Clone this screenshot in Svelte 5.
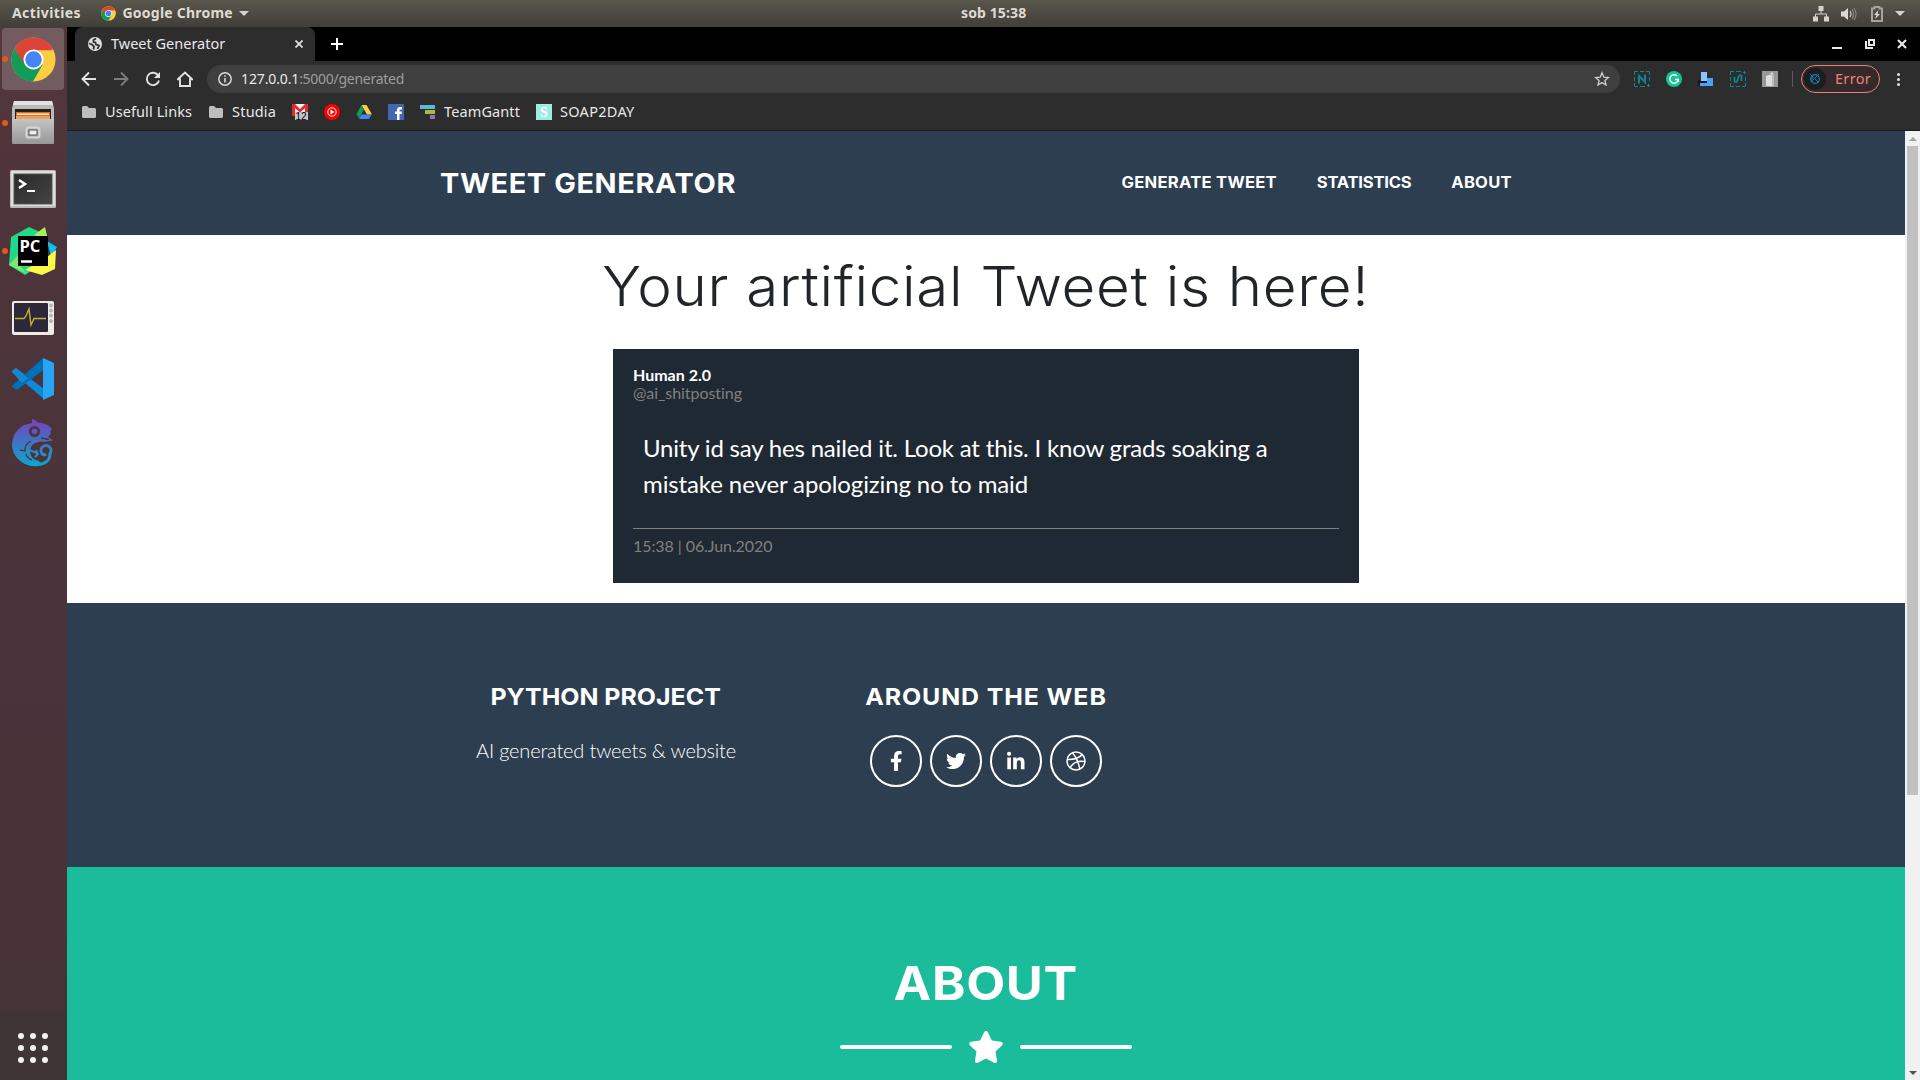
<script>
  const bookmarks = [
    { icon: 'folder', text: 'Usefull Links', cls: 'usefull' },
    { icon: 'folder', text: 'Studia', cls: 'studia' },
    { icon: 'gmail' },
    { icon: 'music' },
    { icon: 'drive' },
    { icon: 'facebook' },
    { icon: 'gantt', text: 'TeamGantt', cls: 'gantt' },
    { icon: 'soap', text: 'SOAP2DAY', cls: 'soap' }
  ];
  const apps = [
    { name: 'chrome', running: true, active: true },
    { name: 'files', running: true },
    { name: 'terminal' },
    { name: 'pycharm', running: true },
    { name: 'monitor' },
    { name: 'vscode' },
    { name: 'chameleon' }
  ];
  const links = [
    { text: 'Generate Tweet', cls: 'l-gen' },
    { text: 'Statistics', cls: 'l-stat' },
    { text: 'About', cls: 'l-about' }
  ];
  const socials = ['facebook', 'twitter', 'linkedin', 'dribbble'];
</script>

{#snippet chrome()}
  <svg class="fill" viewBox="0 0 48 48">
    <circle cx="24" cy="24" r="23.5" fill="#ffcd40" />
    <path d="M3.6 12.3A23.5 23.5 0 0 1 44.4 12.3L44 14H24L14 30Z" fill="#db4437" />
    <path d="M3.6 12.3A23.5 23.5 0 0 0 23.5 47.5L34 29 24 34 15 30Z" fill="#0f9d58" />
    <circle cx="24" cy="24" r="10.7" fill="#fff" />
    <circle cx="24" cy="24" r="8.8" fill="#4285f4" />
  </svg>
{/snippet}

{#snippet appIcon(name)}
  {#if name === 'chrome'}
    <div class="i45">{@render chrome()}</div>
  {:else if name === 'files'}
    <svg width="44" height="44" viewBox="0 0 44 44">
      <defs><linearGradient id="cab" x2="0" y2="1"><stop stop-color="#c4c4c4" /><stop offset="1" stop-color="#979797" /></linearGradient></defs>
      <path d="M3 0H41L43 7V20H1V7Z" fill="#b9b9b9" /><path d="M3 0H41L42 4H2Z" fill="#e2e2e2" />
      <path d="M4 8H40V20H4Z" fill="#26211f" />
      <path d="M5 11H39V18H5Z" fill="#df6a1f" /><path d="M6 12.5H38V14H6Z" fill="#fff0d8" /><path d="M5 15H39V18H5Z" fill="#e8a35a" />
      <path d="M1 18H43V42Q43 43 42 43H2Q1 43 1 42Z" fill="url(#cab)" />
      <rect x="15.5" y="26.500" width="13" height="10" rx="2" fill="none" stroke="#d6d6d6" stroke-width="2" />
      <rect x="18" y="29" width="8" height="5" fill="#eee" stroke="#555" />
    </svg>
  {:else if name === 'terminal'}
    <svg class="term" width="46" height="38" viewBox="0 0 46 38">
      <defs><linearGradient id="term" x2="1" y2="1"><stop stop-color="#2a2a2a" /><stop offset="1" stop-color="#444" /></linearGradient></defs>
      <rect width="46" height="38" rx="1.500" fill="#b8b8b8" /><rect x="1" y="1" width="44" height="35" fill="#dedede" />
      <rect x="4" y="4" width="38" height="30" fill="url(#term)" stroke="#555" />
      <path d="M9 10l6 4-6 4" fill="none" stroke="#fff" stroke-width="2.500" /><path d="M17 21h8" stroke="#fff" stroke-width="2" />
    </svg>
  {:else if name === 'pycharm'}
    <svg width="48" height="48" viewBox="0 0 48 48">
      <path d="M2 10L20 0 31 5 28 40 16 48 0 38Z" fill="#21d789" />
      <path d="M25 8L36 0 39 13Z" fill="#a8f05a" />
      <path d="M38 14L48 20 42 30Z" fill="#07c3f2" />
      <path d="M47 23L46 42 33 48 16 43 38 30Z" fill="#fcf84a" />
      <path d="M0 38L9 28 12 40 18 47 8 42Z" fill="#7be86c" />
      <rect x="9" y="9" width="30" height="30" fill="#000" /><path d="M12 34.500h11" stroke="#fff" stroke-width="2.500" />
      <text class="pc" x="10.500" y="25">PC</text>
    </svg>
  {:else if name === 'monitor'}
    <svg class="mon" width="42" height="34" viewBox="0 0 42 34">
      <rect width="42" height="34" rx="2" fill="#eeebe6" /><rect x="2" y="2" width="34" height="29" rx="1" fill="#2d2839" />
      <path d="M3 17.500H12L14 15 17 8 19 24 22 17.500H34" fill="none" stroke="#c8ac30" stroke-width="1.400" />
      <g fill="#bbb" stroke="#999" stroke-width=".6"><circle cx="39" cy="4.500" r="1.500" /><circle cx="39" cy="9.500" r="1.500" /><circle cx="39" cy="14.500" r="1.500" /><circle cx="39" cy="20" r="1.500" /></g>
    </svg>
  {:else if name === 'vscode'}
    <svg width="42" height="42" viewBox="0 0 42 42">
      <path d="M0 13L4 10 32 31V41L0 14Z" fill="#0c8bd8" /><path d="M0 28L31 0V12L5 32 0 29Z" fill="#0070b8" /><path d="M1 13L4 10 16 20 10 25 0 14Z" fill="#1488d0" />
      <path d="M31 0L42 5V37L31 42Z" fill="#27a5f2" />
    </svg>
  {:else}
    <svg width="42" height="48" viewBox="0 0 42 48">
      <defs><linearGradient id="cham" gradientUnits="userSpaceOnUse" x1="0" y1="0" x2="0" y2="48"><stop stop-color="#7a3fbd" /><stop offset=".5" stop-color="#3e75c4" /><stop offset="1" stop-color="#08aad4" /></linearGradient></defs>
      <path d="M20 0Q23 0 26 3.500Q33 4 38 7.500L40 10 38 12Q40 15 36 18L41 21.500Q35 23 28 22.500Q18 24 18 32Q18 40 27 42L30 46Q22 49 13 45Q0 38 0 25Q1 12 12 6L20 4Z" fill="url(#cham)" />
      <path d="M22 45.500Q38 46 38 34.500A5 5 0 1 0 30 34.500Q31.500 37 34 35" fill="none" stroke="url(#cham)" stroke-width="3" />
      <path d="M17 31L25 34M24 31L26 35 23 38" fill="none" stroke="url(#cham)" stroke-width="2" />
      <circle cx="22.500" cy="12.500" r="5.500" fill="#4b353f" /><circle cx="22.500" cy="12.500" r="2.800" fill="#5c58be" />
      <path d="M37 20.500L29 19M19 22Q12 26 13 32L8 31M14 35Q15 39 20 41" fill="none" stroke="#4b353f" stroke-width="1.300" />
    </svg>
  {/if}
{/snippet}

{#snippet mark(icon)}
  <svg width="16" height="16" viewBox="0 0 16 16">
    {#if icon === 'folder'}
      <path d="M1 3.500Q1 2 2.500 2H6L8 4H13.500Q15 4 15 5.500V12.500Q15 14 13.500 14H2.500Q1 14 1 12.500Z" fill="#bdbdbd" />
    {:else if icon === 'gmail'}
      <path d="M0 0H16V12H0Z" fill="#f4f0f0" /><path d="M0 0H3L8 5 13 0H16V8H13V4L8 8.500 3 4V12H0Z" fill="#dd2c30" /><path d="M3 8H16V16H3Z" fill="#c4c4c4" />
      <text class="badge" x="3.500" y="15.500">12</text>
    {:else if icon === 'music'}
      <circle cx="8" cy="8" r="8" fill="#f00" /><circle cx="8" cy="8" r="4.200" fill="none" stroke="#fff" /><path d="M6.500 5.500L10.500 8 6.500 10.500Z" fill="#fff" />
    {:else if icon === 'drive'}
      <path d="M5.500 1H10.500L16 10.500H11Z" fill="#ffcd40" /><path d="M5.500 1L8 5.500 3 14.500 .500 10Z" fill="#0f9d58" /><path d="M5.500 10.500H15.500L13 15H3Z" fill="#4285f4" />
    {:else if icon === 'facebook'}
      <path d="M0 0H16V16H0Z" fill="#4267b2" /><path d="M9 16V10H7V7.500H9V6Q9 3 12 3H14V5.500H12.500Q11.500 5.500 11.500 6.500V7.500H14L13.500 10H11.500V16Z" fill="#fff" />
    {:else if icon === 'gantt'}
      <path d="M0 1H15V5H0Z" fill="#5db8d6" /><path d="M5 6H15V10H5Z" fill="#a2bf43" /><path d="M10 11H15V15H10Z" fill="#a06fae" />
    {:else}
      <path d="M0 0H16V16H0Z" fill="#a0ebe7" /><text class="s" x="4" y="13">S</text>
    {/if}
  </svg>
{/snippet}

<div class="desktop">
  <header class="topbar">
    <div class="side-l">
      <b class="t activities">Activities</b>
      <span class="i15">{@render chrome()}</span>
      <b class="t gchrome">Google Chrome</b>
      <i class="caret"></i>
    </div>
    <b class="t clock">sob 15:38</b>
    <div class="side-r">
      <svg width="16" height="16" viewBox="0 0 16 16"><path d="M5.500 0h5v5h-5zM0 10.500h5v5H0zM11 10.500h5v5h-5z" fill="#d5d3cc" /><path d="M8 5V8M2.500 11V8H13.500V11" fill="none" stroke="#d5d3cc" /></svg>
      <svg width="16" height="14" viewBox="0 0 16 14"><path d="M0 4.500H3L7 1V13L3 9.500H0Z" fill="#dad8d2" /><path d="M9 4Q11 7 9 10" fill="none" stroke="#c0beb8" stroke-width="1.300" /><path d="M11 2Q14 7 11 12M13 1Q17 7 13 13" fill="none" stroke="#85837b" stroke-width="1.300" /></svg>
      <svg width="12" height="16" viewBox="0 0 12 16"><path d="M1 2.500H3.500V1H8.500V2.500H11V15H1Z" fill="none" stroke="#a5a39c" stroke-width="2" /><path d="M7.500 4L3 9H5.500L4 13 9 8H6.500Z" fill="#dad8d2" /></svg>
      <i class="caret"></i>
    </div>
  </header>

  <div class="workspace">
    <aside class="dock">
      {#each apps as app}
        <div class="tile" class:active={app.active} class:running={app.running}>{@render appIcon(app.name)}</div>
      {/each}
      <div class="apps">
        {#each Array(9) as _}<i></i>{/each}
      </div>
    </aside>

    <main class="window">
      <div class="tabs">
        <div class="tab">
          <svg width="14" height="14" viewBox="0 0 14 14"><circle cx="7" cy="7" r="7" fill="#dedede" /><path d="M8 1.500L5.500 3V5L7.500 5.500 8 7.500 11 8.500 9.500 12M1 6.500L4 7.500 6 9.500 5.500 12.500" fill="none" stroke="#2d2d2d" stroke-width="1.800" /></svg>
          <span class="t tabname">Tweet Generator</span>
          <svg class="tabx" width="8" height="8" viewBox="0 0 8 8"><path d="M.5.5l7 7m0-7l-7 7" stroke="#e4e4e4" stroke-width="1.700" /></svg>
        </div>
        <svg class="plus" width="12" height="12" viewBox="0 0 12 12"><path d="M6 0V12M0 6H12" stroke="#fff" stroke-width="2" /></svg>
        <div class="winctl">
          <svg width="10" height="10" viewBox="0 0 10 10"><path d="M0 9H10" stroke="#e8e8e8" stroke-width="2" /></svg>
          <svg width="10" height="10" viewBox="0 0 10 10"><path d="M4 1H9V6H4ZM1 2V9H8" fill="none" stroke="#e8e8e8" stroke-width="2" /></svg>
          <svg width="10" height="10" viewBox="0 0 10 10"><path d="M1 1l8 8m0-8l-8 8" stroke="#e8e8e8" stroke-width="2.200" /></svg>
        </div>
      </div>

      <div class="toolbar">
        <svg width="16" height="16" viewBox="0 0 16 16"><path d="M15 8H2M8 1.500L1.500 8 8 14.500" fill="none" stroke="#e2e2e2" stroke-width="1.900" /></svg>
        <svg width="16" height="16" viewBox="0 0 16 16"><path d="M1 8H14M8 1.500L14.500 8 8 14.500" fill="none" stroke="#7d7d7d" stroke-width="1.900" /></svg>
        <svg width="16" height="16" viewBox="0 0 16 16"><path d="M13.500 5A6.200 6.200 0 1 0 14 9.500" fill="none" stroke="#e2e2e2" stroke-width="1.900" /><path d="M15 1V7H9Z" fill="#e2e2e2" /></svg>
        <svg width="16" height="16" viewBox="0 0 16 16"><path d="M0.800 8.200L8 1.500 15.200 8.200H13V15H3V8.200Z" fill="none" stroke="#e2e2e2" stroke-width="1.900" /></svg>
        <div class="omnibox">
          <svg width="14" height="14" viewBox="0 0 14 14"><circle cx="7" cy="7" r="6.200" fill="none" stroke="#d8d8d8" stroke-width="1.500" /><path d="M7 6V10.500M7 3.300V4.800" stroke="#d8d8d8" stroke-width="1.600" /></svg>
          <span class="url"><span class="t host">127.0.0.1</span><span class="t path">:5000/generated</span></span>
          <svg class="star" width="16" height="16" viewBox="0 0 16 16"><path d="M8 1.800L9.800 6.200 14.500 6.500 10.900 9.500 12 14 8 11.600 4 14 5.100 9.500 1.500 6.500 6.200 6.200Z" fill="none" stroke="#cfcfcf" stroke-width="1.300" /></svg>
        </div>
        <div class="ext">
          <svg width="16" height="16" viewBox="0 0 16 16"><path d="M.5 4V.5H4M6 .5h4M12 .5H15.500V4M15.500 6v4M.5 6v4M.5 12V15.500H4M6 15.500h5M13 14.500h3M14.500 13v3" fill="none" stroke="#0c8692" /><path d="M5 12.500V5L11 11V3.500" fill="none" stroke="#0c8692" stroke-width="2" /></svg>
          <svg width="16" height="16" viewBox="0 0 16 16"><circle cx="8" cy="8" r="8" fill="#15c39a" /><path d="M11 5A4.200 4.200 0 1 0 12.200 8.500H9M12.200 8.500V11" fill="none" stroke="#fff" stroke-width="1.500" /></svg>
          <svg width="16" height="16" viewBox="0 0 16 16"><path d="M3 1H9V11H3Z" fill="#8fc4fa" /><path d="M9 7H15V15H2V11H9Z" fill="#48a2fa" /><path d="M1 9V15M1 11H9" stroke="#16181d" stroke-width="2" /></svg>
          <svg width="16" height="16" viewBox="0 0 16 16"><path d="M.5 4V.5H4M6 .5h5M13 1.500h3M14.500 0v3M15.500 6v4M.5 6v4M.5 12V15.500H4M6 15.500h4M12 15.500H15.500V12" fill="none" stroke="#0c8692" /><path d="M4.500 6V10.500Q6.500 12.500 7.500 9L8.500 6Q9.500 3 11.500 5V10" fill="none" stroke="#0c8692" stroke-width="1.700" /></svg>
          <svg width="16" height="16" viewBox="0 0 16 16"><path d="M0 0H16V16H0Z" fill="#989898" /><path d="M4 5L8 3.500 12 5V14.500Q8 16 4 14.500ZM8 3L10 1 12 4" fill="#ddd" /><path d="M11 5V14" stroke="#bbb" stroke-width="2" /></svg>
        </div>
        <div class="error">
          <span class="avatar"><svg width="12" height="12" viewBox="0 0 12 12"><circle cx="6" cy="6" r="4.300" fill="none" stroke="#1083a8" stroke-width="1.200" /><path d="M1 1L10 10M10 1L3 8M3 3V9" stroke="#1177cc" /></svg></span>
          <span class="t err">Error</span>
        </div>
        <div class="menu"><i></i><i></i><i></i></div>
      </div>

      <nav class="bookmarks">
        {#each bookmarks as b}
          <a class="bm">{@render mark(b.icon)}{#if b.text}<span class="t b-{b.cls}">{b.text}</span>{/if}</a>
        {/each}
      </nav>

      <div class="viewport">
        <div class="page">
          <nav class="site-nav">
            <div class="container">
              <span class="t brand">Tweet Generator</span>
              <div class="links">{#each links as l}<span class="t {l.cls}">{l.text}</span>{/each}</div>
            </div>
          </nav>
          <section class="hero">
            <h1><span class="t h">Your artificial Tweet is here!</span></h1>
            <article class="tweet">
              <b class="t who">Human 2.0</b>
              <span class="t handle">@ai_shitposting</span>
              <p><span class="tight">Unity id say hes nailed it. Look at this. I know grads soaking a</span> mistake never apologizing no to maid</p>
              <div class="t time">15:38 | 06.Jun.2020</div>
            </article>
          </section>
          <footer>
            <div class="cols">
              <div class="col"><h4><span class="t f1">Python Project</span></h4><p><span class="t ai">AI generated tweets &amp; website</span></p></div>
              <div class="col">
                <h4><span class="t f2">Around the Web</span></h4>
                <div class="socials">
                  {#each socials as s}
                    <a class="social">
                      {#if s === 'facebook'}
                        <svg width="12.500" height="20" viewBox="0 0 320 512"><path fill="#fff" d="M279.140 288l14.220-92.660h-88.910v-60.130c0-25.350 12.420-50.060 52.240-50.060h40.420V6.260S260.430 0 225.360 0c-73.220 0-121.080 44.380-121.080 124.720v70.620H22.890V288h81.390v224h100.170V288z" /></svg>
                      {:else if s === 'twitter'}
                        <svg width="20" height="20" viewBox="0 0 512 512"><path fill="#fff" d="M459.370 151.716c.325 4.548.325 9.097.325 13.645 0 138.720-105.583 298.558-298.558 298.558-59.452 0-114.680-17.219-161.137-47.106 8.447.974 16.568 1.299 25.340 1.299 49.055 0 94.213-16.568 130.274-44.832-46.132-.975-84.792-31.188-98.112-72.772 6.498.974 12.995 1.624 19.818 1.624 9.421 0 18.843-1.300 27.614-3.573-48.081-9.747-84.143-51.980-84.143-102.985v-1.299c13.969 7.797 30.214 12.670 47.431 13.319-28.264-18.843-46.781-51.005-46.781-87.391 0-19.492 5.197-37.360 14.294-52.954 51.655 63.675 129.300 105.258 216.365 109.807-1.624-7.797-2.599-15.918-2.599-24.040 0-57.828 46.782-104.934 104.934-104.934 30.213 0 57.502 12.670 76.670 33.137 23.715-4.548 46.456-13.320 66.599-25.340-7.798 24.366-24.366 44.833-46.132 57.827 21.117-2.273 41.584-8.122 60.426-16.243-14.292 20.791-32.161 39.308-52.628 54.253z" /></svg>
                      {:else if s === 'linkedin'}
                        <svg width="17.500" height="20" viewBox="0 -16 448 512"><path fill="#fff" d="M100.280 448H7.400V148.900h92.880zM53.790 108.100C24.090 108.100 0 83.500 0 53.800a53.790 53.790 0 0 1 107.580 0c0 29.700-24.100 54.300-53.790 54.300zM447.900 448h-92.680V302.400c0-34.700-.7-79.200-48.290-79.200-48.290 0-55.690 37.700-55.690 76.700V448h-92.780V148.900h89.080v40.800h1.300c12.400-23.500 42.690-48.300 87.880-48.300 94 0 111.280 61.900 111.280 142.300V448z" /></svg>
                      {:else}
                        <svg width="20" height="20" viewBox="0 0 20 20"><g fill="none" stroke="#fff" stroke-width="1.500"><circle cx="10" cy="10" r="9" /><path d="M6.500 1.800Q12 8 13.800 18.200M1.200 8.400Q11 9 16.300 3.600M4 16.700Q9 8.500 18.900 10.600" /></g></svg>
                      {/if}
                    </a>
                  {/each}
                </div>
              </div>
              <div class="col"></div>
            </div>
          </footer>
          <section class="about">
            <h2><span class="t ab">About</span></h2>
            <div class="divider"><i></i><svg width="36" height="32" viewBox="0 0 576 512"><path fill="#fff" d="M259.300 17.800L194 150.200 47.900 171.500c-26.200 3.800-36.700 36.100-17.700 54.600l105.700 103-25 145.500c-4.500 26.300 23.200 46 46.400 33.700L288 439.600l130.700 68.700c23.200 12.200 50.900-7.400 46.400-33.700l-25-145.500 105.700-103c19-18.500 8.500-50.800-17.700-54.600L382 150.200 316.700 17.800c-11.700-23.600-45.600-23.900-57.400 0z" /></svg><i></i></div>
          </section>
        </div>
        <div class="scroll"><i class="up"></i><div class="thumb"></div><i class="down"></i></div>
      </div>
    </main>
  </div>
</div>

<style>
  :global(body) { margin: 0; overflow: hidden; }
  * { box-sizing: border-box; }
  svg { display: block; flex: none; }
  .t { white-space: nowrap; }
  .fill { width: 100%; height: 100%; }
  .i45 { width: 45px; height: 45px; }
  .i15 { width: 15px; height: 15px; margin: 0 7px 0 19.5px; }
  .desktop { width: 1920px; height: 1080px; display: flex; flex-direction: column; overflow: hidden; font-family: "Noto Sans", sans-serif; }

  .topbar { height: 27px; flex: none; display: flex; align-items: center; background: linear-gradient(#5a574d, #3f3e38); color: #dfdbd2; font-size: 14px; line-height: 26px; }
  .side-l, .side-r { display: flex; align-items: center; }
  .side-l { width: 961px; padding-left: 12px; }
  .side-r { flex: 1; justify-content: flex-end; gap: 12px; padding-right: 15px; }
  .side-r svg:nth-child(3) { margin-left: 2px; }
  .caret { width: 0; border: 5px solid transparent; border-top-color: #d5d3cc; border-bottom: 0; margin-left: 6px; }
  .side-r .caret { margin-left: 0; }
  .activities { letter-spacing: .4px; }
  .gchrome { letter-spacing: .22px; }
  .clock { letter-spacing: .12px; }
  .topbar .t { padding-bottom: 1px; }

  .workspace { flex: 1; display: flex; min-height: 0; }
  .dock { width: 67px; flex: none; display: flex; flex-direction: column; gap: 2px; padding: 1px 2px 0; background: linear-gradient(#53373b, #4d343b 20%, #4a333a 60%, #463338 93%, #3f3436 94%); }
  .tile { width: 62px; height: 62px; border-radius: 4px; display: flex; align-items: center; justify-content: center; position: relative; }
  .tile.active { background: #725c60; }
  .tile.running::before { content: ""; position: absolute; left: 0; top: 28px; width: 6px; height: 6px; border-radius: 50%; background: #e95420; }
  .apps { margin: auto 0 17px 16px; display: grid; grid-template-columns: repeat(3, 6px); gap: 6px; }
  .apps i { height: 6px; border-radius: 50%; background: #f2f2f2; }
  .pc { font: 700 16.5px "Open Sans", sans-serif; fill: #fff; }
  .mon { margin-top: 6px; }
  .term { margin-top: 3px; }

  .window { flex: 1; display: flex; flex-direction: column; min-width: 0; background: #2d2d2d; }
  .tabs { height: 34px; flex: none; display: flex; align-items: center; background: #000; padding-left: 8px; }
  .tab { width: 240px; height: 34px; border-radius: 8px 8px 0 0; background: #2d2d2d; display: flex; align-items: center; padding: 0 12px 0 13px; color: #e8e8e8; font-size: 14.5px; }
  .tabname { margin-left: 9px; padding-bottom: 2px; }
  .tabx { margin-left: auto; }
  .plus { margin-left: 16px; }
  .winctl { margin-left: auto; display: flex; gap: 22.5px; padding-right: 13px; }

  .toolbar { height: 36px; flex: none; display: flex; align-items: center; padding: 0 15px 0 14px; }
  .toolbar > svg { margin-right: 16px; }
  .omnibox { width: 1413px; height: 28px; border-radius: 14px; background: #3f3f3f; display: flex; align-items: center; padding: 0 10px 0 11px; margin-left: -2px; font-size: 14px; }
  .url { margin-left: 9px; padding-bottom: 2px; color: #9d9d9d; display: flex; }
  .host { color: #e8e8e8; letter-spacing: -.13px; }
  .path { letter-spacing: -.27px; }
  .star { margin-left: auto; }
  .ext { display: flex; gap: 16px; margin-left: 14px; }
  .error { width: 79px; height: 28px; margin-left: 23px; border: 1px solid #e8837a; border-radius: 14px; background: #332a29; display: flex; align-items: center; gap: 9px; padding-left: 2px; color: #e8837a; font-size: 14.5px; position: relative; }
  .error::before { content: ""; position: absolute; left: -10px; top: 5px; width: 1px; height: 16px; background: #5a5a5a; }
  .err { letter-spacing: .3px; padding-bottom: 2px; }
  .avatar { width: 22px; height: 22px; border-radius: 50%; background: #1c1d20; display: flex; align-items: center; justify-content: center; }
  .menu { margin-left: auto; margin-right: 5px; display: grid; gap: 2px; }
  .menu i { width: 3px; height: 3px; border-radius: 50%; background: #e2e2e2; }

  .bookmarks { height: 34px; flex: none; display: flex; align-items: center; gap: 16px; padding: 0 14px 3px; border-bottom: 1px solid #1c1c1c; color: #e8e8e8; font-size: 14.5px; }
  .bm { display: flex; align-items: center; gap: 8px; }
  .bm .t { padding-bottom: 2px; }
  .b-usefull { letter-spacing: .09px; }
  .b-studia { letter-spacing: .17px; }
  .b-gantt { letter-spacing: .1px; }
  .b-soap { letter-spacing: .3px; }
  .badge { font: 10px "Liberation Sans", sans-serif; fill: #000; }
  .s { font: 700 14px "Liberation Serif", serif; fill: #fff; }

  .viewport { flex: 1; min-height: 0; display: flex; overflow: hidden; }
  .page { flex: 1; min-width: 0; background: #fff; font-family: Lato, sans-serif; }
  .brand, .links, h1, h4, h2 { font-family: Inter, sans-serif; margin: 0; }
  .site-nav { height: 104px; background: #2c3e50; color: #fff; text-transform: uppercase; font-weight: 700; }
  .container { width: 1140px; height: 104px; margin: 0 auto; padding: 0 44px 0 24px; display: flex; align-items: center; justify-content: space-between; }
  .brand { font-size: 27px; letter-spacing: .57px; transform: scaleX(1.07); transform-origin: left; }
  .links { display: flex; gap: 37.3px; font-size: 15.5px; padding-bottom: 2px; transform: scaleX(1.07); transform-origin: right; }
  .l-gen { letter-spacing: .26px; }
  .l-stat { letter-spacing: -.22px; }
  .l-about { letter-spacing: .25px; }
  .hero { height: 368px; padding-top: 18px; }
  h1 { font-size: 55px; font-weight: 300; line-height: 67px; letter-spacing: .63px; text-align: center; color: #212529; }
  h1 .t, h4 .t, h2 .t { display: inline-block; transform: scaleX(1.06); }
  .tweet { width: 746px; height: 234px; margin: 29px auto 0; padding: 17px 20px 0; background: #1f2933; color: #fff; display: flex; flex-direction: column; align-items: flex-start; font-size: 16px; line-height: 18px; }
  .handle, .time { color: #808080; }
  .handle { letter-spacing: -.05px; }
  .tweet p { margin: 28px 0 0 10px; font-size: 24px; line-height: 36px; width: 640px; letter-spacing: -.11px; }
  .tight { letter-spacing: -.19px; }
  .time { align-self: stretch; border-top: 1px solid #808080; margin-top: 26px; padding-top: 8px; letter-spacing: -.08px; }
  footer { height: 264px; background: #2c3e50; color: #fff; padding-top: 79px; }
  .cols { width: 1140px; margin: 0 auto; display: flex; text-align: center; }
  .col { width: 380px; }
  h4 { font-size: 23.5px; line-height: 29px; font-weight: 700; text-transform: uppercase; margin-bottom: 24px; }
  .f2 { letter-spacing: .85px; }
  .ai { letter-spacing: -.18px; }
  .col p { margin: 0; font-size: 20px; font-weight: 300; line-height: 30px; }
  .socials { display: flex; gap: 8px; justify-content: center; }
  .social { width: 52px; height: 52px; border: 2px solid #fff; border-radius: 50%; display: flex; align-items: center; justify-content: center; }
  .about { height: 213px; background: #1abc9c; padding-top: 87px; color: #fff; text-align: center; }
  h2 { font-size: 46px; line-height: 58px; text-transform: uppercase; }
  h2 .ab { transform: scaleX(1.1); letter-spacing: .6px; }
  .divider { display: flex; justify-content: center; align-items: center; gap: 16px; margin-top: 19px; }
  .divider i { width: 112px; height: 4px; border-radius: 2px; background: #fff; }
  .scroll { width: 15px; background: #f1f1f1; display: flex; flex-direction: column; align-items: center; }
  .up, .down { width: 0; border: 4px solid transparent; }
  .up { border-bottom-color: #a3a3a3; border-top: 0; margin: 6px 0 5px; }
  .down { border-top-color: #505050; border-bottom: 0; margin: auto 0 5px; }
  .thumb { width: 11px; height: 649px; background: #c1c1c1; }
</style>
